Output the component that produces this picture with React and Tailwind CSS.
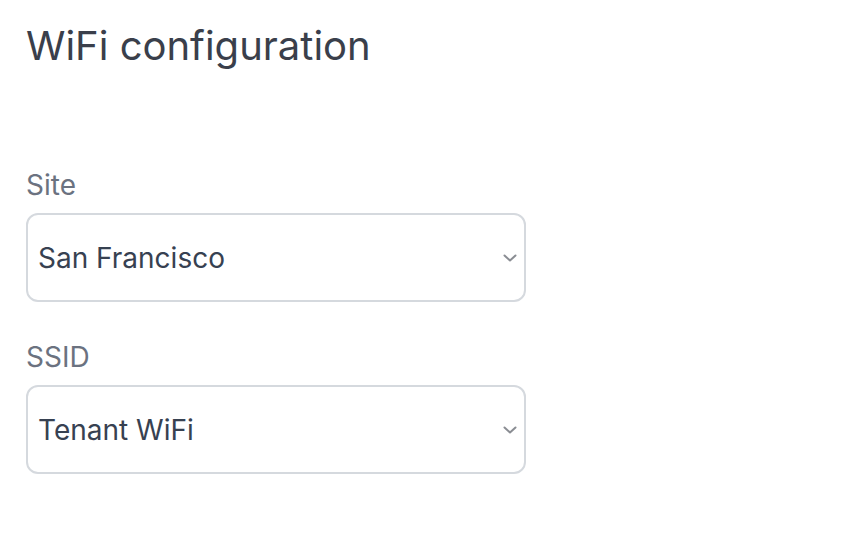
import { useState } from "react";

const sites = ["San Francisco", "New York", "London"];
const ssids = ["Tenant WiFi", "Guest WiFi", "Staff WiFi"];

function Chevron() {
    return (
        <svg width="14" height="8" viewBox="0 0 14 8" fill="none" className="pointer-events-none absolute right-[9px] top-1/2 -translate-y-1/2 text-[#8a8d93]">
            <path d="M1.5 1.5L7 6.5L12.5 1.5" stroke="currentColor" strokeWidth="2" strokeLinecap="round" strokeLinejoin="round" />
        </svg>
    );
}

function SelectField({ label, options, value, onChange }) {
    return (
        <div className="flex flex-col">
            <label className="text-[28px] leading-[40px] text-[#6b7280] mb-[8px]">{label}</label>
            <div className="relative w-[500px]">
                <select
                    value={value}
                    onChange={(e) => onChange(e.target.value)}
                    className="appearance-none w-full h-[89px] rounded-[12px] border-2 border-[#d5d9de] bg-white pl-[10px] pr-10 text-[28px] text-[#374151] outline-none"
                >
                    {options.map((o) => (
                        <option key={o} value={o}>{o}</option>
                    ))}
                </select>
                <Chevron />
            </div>
        </div>
    );
}

export default function App() {
    const [site, setSite] = useState(sites[0]);
    const [ssid, setSsid] = useState(ssids[0]);

    return (
        <div className="min-h-[546px] bg-white px-[26px] pt-[22px] font-['Inter',sans-serif]">
            <h1 className="text-[40px] leading-[48px] text-[#3a3f4b] mb-[95px]">WiFi configuration</h1>
            <div className="flex flex-col gap-[35px]">
                <SelectField label="Site" options={sites} value={site} onChange={setSite} />
                <SelectField label="SSID" options={ssids} value={ssid} onChange={setSsid} />
            </div>
        </div>
    );
}
